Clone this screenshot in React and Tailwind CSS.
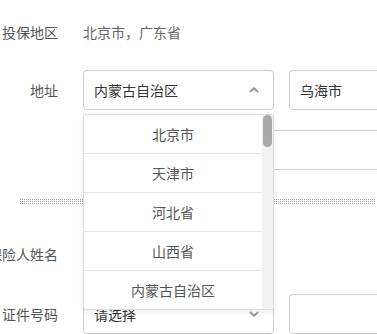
import React from "react";

const provinces = ["北京市", "天津市", "河北省", "山西省", "内蒙古自治区", "辽宁省", "吉林省"];

const Label = ({ children }) => (
  <div className="w-[58px] shrink-0 flex justify-end whitespace-nowrap text-[#555]">
    {children}
  </div>
);

const Chevron = ({ up }) => (
  <svg width="10" height="6" viewBox="0 0 10 6" className="absolute right-[14px] top-1/2 -translate-y-1/2">
    <path
      d={up ? "M1 5 L5 1.2 L9 5" : "M1 1 L5 4.8 L9 1"}
      fill="none"
      stroke="#999"
      strokeWidth="2"
    />
  </svg>
);

const Dots = () => (
  <div className="ml-[20px] mr-[2px] flex flex-col gap-[1px]">
    <div className="border-t border-dotted border-[#aaa]"></div>
    <div className="border-t border-dotted border-[#aaa]"></div>
    <div className="border-t border-dotted border-[#aaa]"></div>
  </div>
);

const App = () => {
  return (
    <div
      className="w-[377px] h-[334px] overflow-hidden bg-white text-[14px]"
      style={{ fontFamily: '"Noto Sans CJK SC", "Noto Sans", sans-serif' }}
    >
      <div className="pt-[12px] flex flex-col">
        {/* 投保地区 */}
        <div className="h-[40px] flex items-center gap-[25px]">
          <Label>投保地区</Label>
          <div className="text-[#666]">北京市，广东省</div>
        </div>

        {/* 地址 */}
        <div className="mt-[18px] h-[40px] flex items-center gap-[25px]">
          <Label>地址</Label>
          <div className="flex gap-[15px]">
            <div className="relative w-[191px] h-[40px] border border-[#ccc] rounded-[4px] pl-[10px] flex items-center text-[#333]">
              内蒙古自治区
              <Chevron up />
              {/* dropdown */}
              <div className="absolute z-10 left-[-1px] top-[43px] w-[191px] h-[196px] bg-white border border-[#ddd] rounded-[3px] shadow-[0_2px_6px_rgba(0,0,0,0.08)] flex overflow-hidden">
                <div className="flex-1 flex flex-col">
                  {provinces.map((p) => (
                    <div
                      key={p}
                      className="h-[39px] shrink-0 border-b border-[#e3e3e3] flex items-center justify-center text-[#555]"
                    >
                      {p}
                    </div>
                  ))}
                </div>
                <div className="w-[11px] bg-[#f1f1f1] flex justify-center">
                  <div className="w-[9px] h-[32px] rounded-full bg-[#a9a9a9]"></div>
                </div>
              </div>
            </div>
            <div className="w-[191px] h-[40px] border border-[#ccc] rounded-[4px] pl-[10px] flex items-center text-[#333]">
              乌海市
            </div>
          </div>
        </div>

        {/* 详细地址 */}
        <div className="mt-[20px] h-[40px] flex gap-[25px]">
          <div className="w-[58px] shrink-0"></div>
          <div className="w-[400px] shrink-0 h-[40px] border border-[#ccc] rounded-[4px]"></div>
        </div>

        <div className="mt-[29px]">
          <Dots />
        </div>

        {/* 被保险人姓名 */}
        <div className="mt-[30px] h-[40px] flex items-center gap-[25px]">
          <Label>被保险人姓名</Label>
          <div className="w-[191px] h-[40px] border border-[#ccc] rounded-[4px]"></div>
        </div>

        {/* 证件号码 */}
        <div className="mt-[20px] h-[40px] flex items-center gap-[25px]">
          <Label>证件号码</Label>
          <div className="flex gap-[15px]">
            <div className="relative w-[191px] h-[40px] border border-[#ccc] rounded-[4px] pl-[10px] flex items-center text-[#333]">
              请选择
              <Chevron />
            </div>
            <div className="w-[191px] h-[40px] border border-[#ccc] rounded-[4px]"></div>
          </div>
        </div>
      </div>
    </div>
  );
};

export default App;
